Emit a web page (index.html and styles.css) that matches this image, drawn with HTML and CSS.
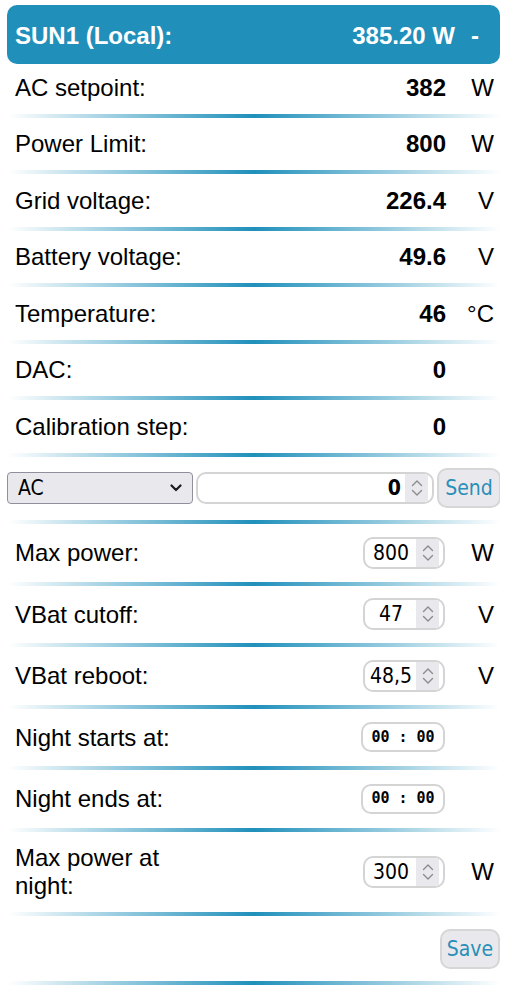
FILE: index.html
```html
<!DOCTYPE html>
<html lang="en">
<head>
<meta charset="utf-8">
<title>SUN1</title>
<link rel="stylesheet" href="styles.css">
</head>
<body>
<div class="card">
  <div class="head">
    <span class="title">SUN1 (Local):</span>
    <span class="power">385.20 W</span>
    <span class="dash">-</span>
  </div>

  <div class="row first"><span class="lbl">AC setpoint:</span><span class="val">382</span><span class="unit">W</span></div>
  <div class="sep"></div>
  <div class="row"><span class="lbl">Power Limit:</span><span class="val">800</span><span class="unit">W</span></div>
  <div class="sep"></div>
  <div class="row"><span class="lbl">Grid voltage:</span><span class="val">226.4</span><span class="unit">V</span></div>
  <div class="sep"></div>
  <div class="row"><span class="lbl">Battery voltage:</span><span class="val">49.6</span><span class="unit">V</span></div>
  <div class="sep"></div>
  <div class="row"><span class="lbl">Temperature:</span><span class="val">46</span><span class="unit">°C</span></div>
  <div class="sep"></div>
  <div class="row"><span class="lbl">DAC:</span><span class="val">0</span><span class="unit"></span></div>
  <div class="sep"></div>
  <div class="row"><span class="lbl">Calibration step:</span><span class="val">0</span><span class="unit"></span></div>
  <div class="sep"></div>

  <div class="cmd">
    <div class="select"><span>AC</span>
      <svg class="chev" width="12" height="8" viewBox="0 0 12 8"><path d="M1.5 1.5 L6 6 L10.5 1.5" fill="none" stroke="#1b1b1b" stroke-width="2.2" stroke-linecap="round" stroke-linejoin="round"/></svg>
    </div>
    <div class="num big">
      <input type="text" value="0">
      <span class="spin"><svg width="14" height="22" viewBox="0 0 14 22"><path d="M2.5 8.5 L7 4 L11.5 8.5 M2.5 13.5 L7 18 L11.5 13.5" fill="none" stroke="#8c8c8c" stroke-width="1.4" stroke-linecap="round" stroke-linejoin="round"/></svg></span>
    </div>
    <button class="btn send" type="button">Send</button>
  </div>
  <div class="sep"></div>

  <div class="frow"><span class="lbl">Max power:</span>
    <div class="num"><input type="text" value="800"><span class="spin"><svg width="14" height="22" viewBox="0 0 14 22"><path d="M2.5 8.5 L7 4 L11.5 8.5 M2.5 13.5 L7 18 L11.5 13.5" fill="none" stroke="#8c8c8c" stroke-width="1.4" stroke-linecap="round" stroke-linejoin="round"/></svg></span></div>
    <span class="unit">W</span></div>
  <div class="sep"></div>
  <div class="frow"><span class="lbl">VBat cutoff:</span>
    <div class="num"><input type="text" value="47"><span class="spin"><svg width="14" height="22" viewBox="0 0 14 22"><path d="M2.5 8.5 L7 4 L11.5 8.5 M2.5 13.5 L7 18 L11.5 13.5" fill="none" stroke="#8c8c8c" stroke-width="1.4" stroke-linecap="round" stroke-linejoin="round"/></svg></span></div>
    <span class="unit">V</span></div>
  <div class="sep"></div>
  <div class="frow"><span class="lbl">VBat reboot:</span>
    <div class="num"><input type="text" value="48,5"><span class="spin"><svg width="14" height="22" viewBox="0 0 14 22"><path d="M2.5 8.5 L7 4 L11.5 8.5 M2.5 13.5 L7 18 L11.5 13.5" fill="none" stroke="#8c8c8c" stroke-width="1.4" stroke-linecap="round" stroke-linejoin="round"/></svg></span></div>
    <span class="unit">V</span></div>
  <div class="sep"></div>
  <div class="frow"><span class="lbl">Night starts at:</span>
    <div class="time">00 : 00</div>
    <span class="unit"></span></div>
  <div class="sep"></div>
  <div class="frow"><span class="lbl">Night ends at:</span>
    <div class="time">00 : 00</div>
    <span class="unit"></span></div>
  <div class="sep"></div>
  <div class="frow"><span class="lbl">Max power at night:</span>
    <div class="num"><input type="text" value="300"><span class="spin"><svg width="14" height="22" viewBox="0 0 14 22"><path d="M2.5 8.5 L7 4 L11.5 8.5 M2.5 13.5 L7 18 L11.5 13.5" fill="none" stroke="#8c8c8c" stroke-width="1.4" stroke-linecap="round" stroke-linejoin="round"/></svg></span></div>
    <span class="unit">W</span></div>
  <div class="sep"></div>

  <div class="saverow"><button class="btn save" type="button">Save</button></div>
  <div class="sep"></div>
</div>
</body>
</html>
```

FILE: styles.css
```css
* { box-sizing: border-box; }

body {
  margin: 5px 7px 0 7px;
  background: #ffffff;
  color: #000000;
  font-family: "Liberation Sans", Arial, sans-serif;
}

.card {
  width: 493px;
}

.head {
  height: 59px;
  background: #2090bb;
  border-radius: 10px;
  display: flex;
  align-items: center;
  padding: 2px 21px 0 8px;
  color: #ffffff;
  font-weight: bold;
  font-size: 24px;
}

.head .title { flex: 1; }
.head .dash { margin-left: 16px; }

.row {
  display: grid;
  grid-template-columns: 1fr auto 48px;
  align-items: center;
  padding: 12.5px 6px 12.5px 8px;
  font-size: 24px;
  line-height: 27.5px;
}

.row.first { padding-top: 9.5px; }

.val {
  font-weight: bold;
  text-align: right;
}

.unit {
  text-align: right;
}

.sep {
  height: 4px;
  margin: 0 0 0 1px;
  background: linear-gradient(90deg,
    rgba(32, 144, 187, 0) 0%,
    rgba(32, 144, 187, 0.45) 22%,
    rgba(32, 144, 187, 1) 50%,
    rgba(32, 144, 187, 0.45) 78%,
    rgba(32, 144, 187, 0) 100%);
}

.cmd {
  display: flex;
  align-items: center;
  gap: 3px;
  padding: 11.75px 0;
  font-family: "DejaVu Sans Condensed", "DejaVu Sans", sans-serif;
  font-stretch: condensed;
  font-size: 21px;
}

.select {
  width: 186px;
  height: 32px;
  flex: none;
  border: 1px solid #8f8f9d;
  border-radius: 4px;
  background: #e9e9ed;
  display: flex;
  align-items: center;
  justify-content: space-between;
  padding: 0 10px 0 10px;
}

.num {
  width: 82px;
  height: 32px;
  border: 2px solid #d4d4d4;
  border-radius: 10px;
  background: #ffffff;
  display: flex;
  align-items: stretch;
  overflow: hidden;
  padding-right: 4px;
}

.num input {
  flex: 1;
  min-width: 0;
  border: 0;
  outline: none;
  padding: 0 0 0 1px;
  background: transparent;
  color: #000000;
  font-family: "DejaVu Sans Condensed", "DejaVu Sans", sans-serif;
  font-stretch: condensed;
  font-size: 21px;
  text-align: center;
}

.num.big {
  flex: 1;
  width: auto;
  height: 32px;
}

.num.big input {
  text-align: right;
  font-weight: bold;
  padding-right: 4px;
}

.spin {
  width: 23px;
  flex: none;
  background: #e9e9ed;
  display: flex;
  align-items: center;
  justify-content: center;
}

.btn {
  height: 40px;
  border: 2px solid #d6d6d6;
  border-radius: 10px;
  background: #e9e9ed;
  color: #2a8fb8;
  font-family: "DejaVu Sans Condensed", "DejaVu Sans", sans-serif;
  font-stretch: condensed;
  font-size: 21px;
  padding: 0 4px;
  margin: 0;
}

.send {
  width: 64px;
  flex: none;
  margin-right: -1px;
}

.frow {
  display: grid;
  grid-template-columns: 190px 1fr 49px;
  grid-auto-rows: minmax(32px, auto);
  align-items: center;
  padding: 12.75px 6px 12.75px 8px;
  font-size: 24px;
  line-height: 27.5px;
}

.frow .num,
.frow .time {
  justify-self: end;
}

.time {
  width: 84px;
  height: 30px;
  border: 2px solid #d4d4d4;
  border-radius: 10px;
  background: #ffffff;
  display: flex;
  align-items: center;
  justify-content: center;
  font-family: "DejaVu Sans Mono", monospace;
  font-weight: bold;
  font-size: 15px;
}

.saverow {
  display: flex;
  justify-content: flex-end;
  padding: 12.5px 0;
}

.save {
  width: 60px;
}
```
